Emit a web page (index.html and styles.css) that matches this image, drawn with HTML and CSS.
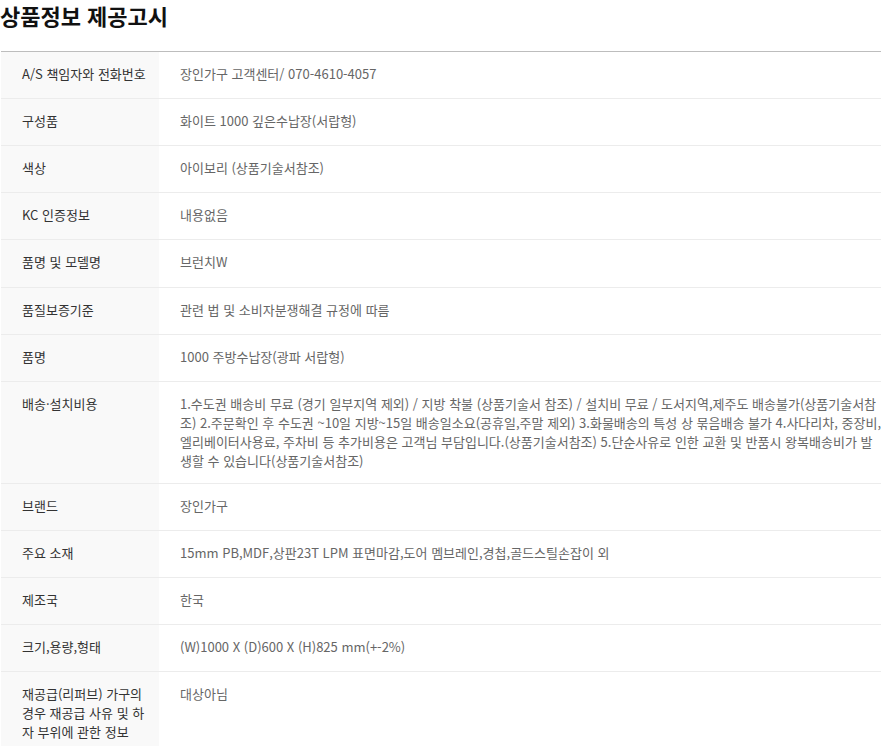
FILE: index.html
```html
<!DOCTYPE html>
<html lang="ko">
<head>
<meta charset="utf-8">
<title>상품정보 제공고시</title>
<link rel="stylesheet" href="styles.css">
</head>
<body>
<div class="notice">
  <h2 class="notice-title">상품정보 제공고시</h2>
  <div class="info-table">
    <div class="row"><div class="th">A/S 책임자와 전화번호</div><div class="td">장인가구 고객센터/ 070-4610-4057</div></div>
    <div class="row"><div class="th">구성품</div><div class="td">화이트 1000 깊은수납장(서랍형)</div></div>
    <div class="row"><div class="th">색상</div><div class="td">아이보리 (상품기술서참조)</div></div>
    <div class="row"><div class="th">KC 인증정보</div><div class="td">내용없음</div></div>
    <div class="row"><div class="th">품명 및 모델명</div><div class="td">브런치W</div></div>
    <div class="row"><div class="th">품질보증기준</div><div class="td">관련 법 및 소비자분쟁해결 규정에 따름</div></div>
    <div class="row"><div class="th">품명</div><div class="td">1000 주방수납장(광파 서랍형)</div></div>
    <div class="row"><div class="th">배송·설치비용</div><div class="td">1.수도권 배송비 무료 (경기 일부지역 제외) / 지방 착불 (상품기술서 참조) / 설치비 무료 / 도서지역,제주도 배송불가(상품기술서참조) 2.주문확인 후 수도권 ~10일 지방~15일 배송일소요(공휴일,주말 제외) 3.화물배송의 특성 상 묶음배송 불가 4.사다리차, 중장비,엘리베이터사용료, 주차비 등 추가비용은 고객님 부담입니다.(상품기술서참조) 5.단순사유로 인한 교환 및 반품시 왕복배송비가 발생할 수 있습니다(상품기술서참조)</div></div>
    <div class="row"><div class="th">브랜드</div><div class="td">장인가구</div></div>
    <div class="row"><div class="th">주요 소재</div><div class="td">15mm PB,MDF,상판23T LPM 표면마감,도어 멤브레인,경첩,골드스틸손잡이 외</div></div>
    <div class="row"><div class="th">제조국</div><div class="td">한국</div></div>
    <div class="row"><div class="th">크기,용량,형태</div><div class="td">(W)1000 X (D)600 X (H)825 mm(+-2%)</div></div>
    <div class="row"><div class="th">재공급(리퍼브) 가구의 경우 재공급 사유 및 하자 부위에 관한 정보</div><div class="td">대상아님</div></div>
  </div>
</div>
</body>
</html>
```

FILE: styles.css
```css
html, body {
  margin: 0;
  padding: 0;
  background: #fff;
}
body {
  font-family: "Noto Sans CJK KR", "Noto Sans", sans-serif;
  font-size: 13px;
  color: #333;
}
.notice {
  width: 886px;
}
.notice-title {
  margin: 0;
  font-size: 22px;
  font-weight: 700;
  line-height: 30px;
  color: #111;
  height: 51px;
}
.info-table {
  margin-left: 1px;
  width: 880px;
  border-top: 1px solid #bdbdbd;
}
.row {
  display: grid;
  grid-template-columns: 158px 1fr;
  border-bottom: 1px solid #ececec;
  min-height: 46.12px;
}
.th {
  background: #f9f9f9;
  color: #333;
  padding: 12px 9px 13px 21px;
  line-height: 19px;
  word-break: break-all;
}
.td {
  color: #666;
  padding: 12px 0 13px 21px;
  margin-right: -1px;
  line-height: 19px;
  word-break: break-all;
}
```
